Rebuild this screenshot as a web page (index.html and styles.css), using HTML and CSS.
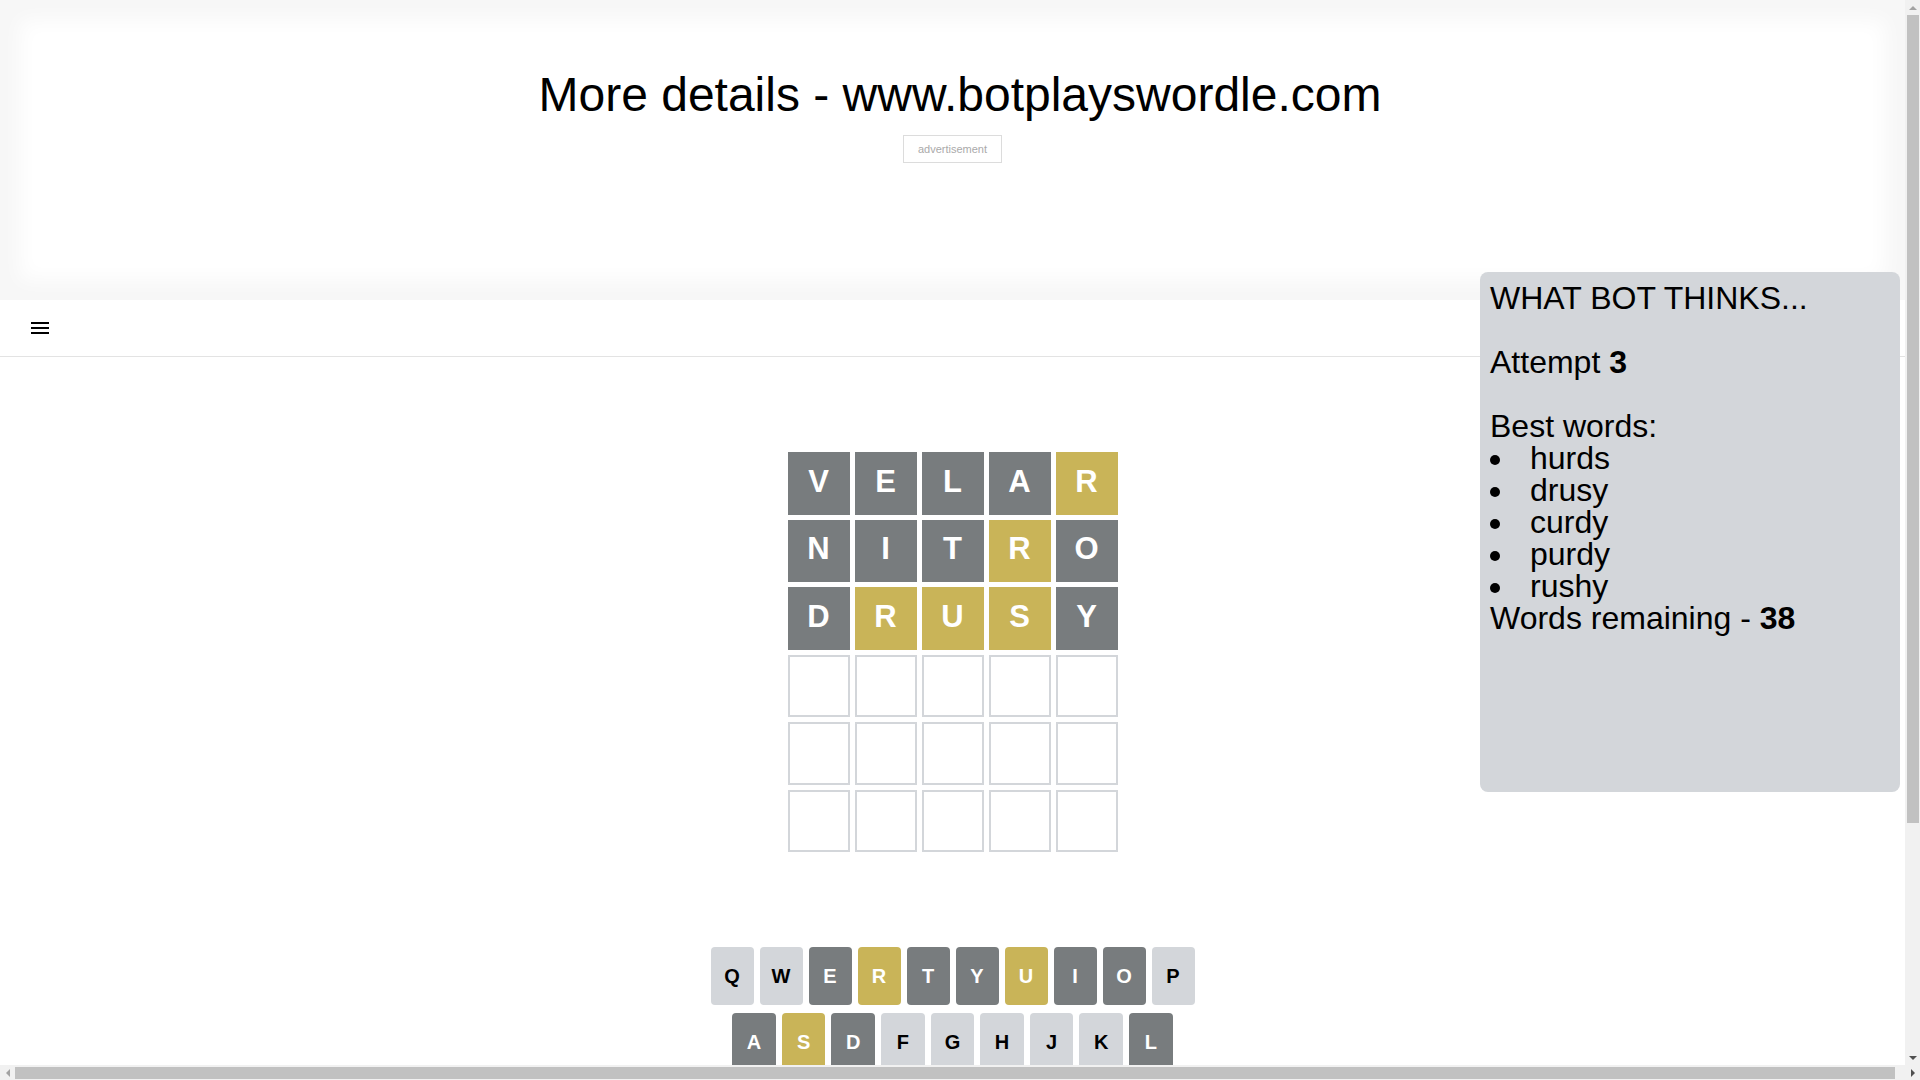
FILE: index.html
```html
<!DOCTYPE html>
<html lang="en">
<head>
    <meta charset="UTF-8">
    <meta name="viewport" content="width=device-width, initial-scale=1.0">
    <title>Bot plays Wordle</title>
    <link rel="stylesheet" href="styles.css">
</head>
<body>
<div class="page">
    <div class="promo">
        <h1>More details - www.botplayswordle.com</h1>
        <div class="ad-slot"><span class="ad-label">advertisement</span></div>
    </div>

    <div class="app">
        <header class="topbar">
            <svg class="menu-icon" width="24" height="24" viewBox="0 0 24 24"><path d="M3 18h18v-2H3v2zm0-5h18v-2H3v2zm0-7v2h18V6H3z" fill="#000"/></svg>
        </header>

        <div class="board-container">
            <div class="board">
                <div class="board-row">
                    <div class="tile absent">v</div>
                    <div class="tile absent">e</div>
                    <div class="tile absent">l</div>
                    <div class="tile absent">a</div>
                    <div class="tile present">r</div>
                </div>
                <div class="board-row">
                    <div class="tile absent">n</div>
                    <div class="tile absent">i</div>
                    <div class="tile absent">t</div>
                    <div class="tile present">r</div>
                    <div class="tile absent">o</div>
                </div>
                <div class="board-row">
                    <div class="tile absent">d</div>
                    <div class="tile present">r</div>
                    <div class="tile present">u</div>
                    <div class="tile present">s</div>
                    <div class="tile absent">y</div>
                </div>
                <div class="board-row">
                    <div class="tile"></div><div class="tile"></div><div class="tile"></div><div class="tile"></div><div class="tile"></div>
                </div>
                <div class="board-row">
                    <div class="tile"></div><div class="tile"></div><div class="tile"></div><div class="tile"></div><div class="tile"></div>
                </div>
                <div class="board-row">
                    <div class="tile"></div><div class="tile"></div><div class="tile"></div><div class="tile"></div><div class="tile"></div>
                </div>
            </div>
        </div>

        <div class="keyboard">
            <div class="keyboard-row">
                <button class="key">q</button>
                <button class="key">w</button>
                <button class="key absent">e</button>
                <button class="key present">r</button>
                <button class="key absent">t</button>
                <button class="key absent">y</button>
                <button class="key present">u</button>
                <button class="key absent">i</button>
                <button class="key absent">o</button>
                <button class="key">p</button>
            </div>
            <div class="keyboard-row">
                <div class="spacer"></div>
                <button class="key absent">a</button>
                <button class="key present">s</button>
                <button class="key absent">d</button>
                <button class="key">f</button>
                <button class="key">g</button>
                <button class="key">h</button>
                <button class="key">j</button>
                <button class="key">k</button>
                <button class="key absent">l</button>
                <div class="spacer"></div>
            </div>
            <div class="keyboard-row">
                <button class="key wide small">enter</button>
                <button class="key">z</button>
                <button class="key">x</button>
                <button class="key">c</button>
                <button class="key absent">v</button>
                <button class="key">b</button>
                <button class="key absent">n</button>
                <button class="key">m</button>
                <button class="key wide">
                    <svg width="24" height="24" viewBox="0 0 24 24"><path fill="#1a1a1b" d="M22 3H7c-.69 0-1.23.35-1.59.88L0 12l5.41 8.11c.36.53.9.89 1.59.89h15c1.1 0 2-.9 2-2V5c0-1.1-.9-2-2-2zm0 16H7.07L2.4 12l4.66-7H22v14zm-11.59-2L14 13.41 17.59 17 19 15.59 15.41 12 19 8.41 17.59 7 14 10.59 10.41 7 9 8.41 12.59 12 9 15.59z"/></svg>
                </button>
            </div>
        </div>
    </div>

    <div class="bot-panel">
        WHAT BOT THINKS...<br><br>
        Attempt <b>3</b><br><br>
        Best words:
        <ul>
            <li>hurds</li>
            <li>drusy</li>
            <li>curdy</li>
            <li>purdy</li>
            <li>rushy</li>
        </ul>
        Words remaining - <b>38</b>
    </div>
</div>

<!-- window scrollbars -->
<div class="scrollbar-v" aria-hidden="true">
    <span class="sb-btn"><i class="arrow up"></i></span>
    <span class="sb-thumb"></span>
    <span class="sb-fill"></span>
    <span class="sb-btn"><i class="arrow down"></i></span>
</div>
<div class="scrollbar-h" aria-hidden="true">
    <span class="sb-btn"><i class="arrow left"></i></span>
    <span class="sb-thumb"></span>
    <span class="sb-fill"></span>
    <span class="sb-btn"><i class="arrow right"></i></span>
</div>
</body>
</html>
```

FILE: styles.css
```css
* { box-sizing: border-box; }
body { margin: 0; overflow: hidden; font-family: "Liberation Sans", Arial, sans-serif; color: #000; background: #fff; }
.page { position: relative; width: calc(100vw - 15px); height: calc(100vh - 15px); overflow: hidden; }

.promo { height: 300px; padding-top: 67px; text-align: center; box-shadow: inset 0 0 20px 20px #f7f7f7; }
.promo h1 { width: 100vw; margin: 0; font-size: 48px; font-weight: normal; }
.ad-slot { margin-top: 13px; }
.ad-label { display: inline-block; padding: 7px 14px; border: 1px solid #dcdcdc; font-size: 11px; color: #aaa; background: #fff; }

.topbar { height: 57px; padding: 0 28px; display: flex; align-items: center; border-bottom: 1px solid #e3e3e3; }
.menu-icon { display: block; }

.board-container { height: 590px; display: flex; align-items: center; justify-content: center; }
.board { width: 330px; height: 400px; display: grid; grid-template-rows: repeat(6, 1fr); gap: 5px; }
.board-row { display: grid; grid-template-columns: repeat(5, 1fr); gap: 5px; }
.tile { display: flex; align-items: center; justify-content: center; padding-bottom: 4px; border: 2px solid #d3d6da; font-size: 31px; font-weight: bold; color: #fff; text-transform: uppercase; line-height: 1; }
.tile.absent { background: #787c7e; border-color: #787c7e; }
.tile.present { background: #c9b458; border-color: #c9b458; }

.keyboard { width: 484px; height: 200px; margin: 0 auto; }
.keyboard-row { display: flex; margin-bottom: 8px; }
.key { flex: 1; height: 58px; margin: 0 6px 0 0; padding: 0; border: 0; border-radius: 4px; background: #d3d6da; color: #000; font-family: "Liberation Sans", Arial, sans-serif; font-size: 20px; font-weight: bold; text-transform: uppercase; display: flex; align-items: center; justify-content: center; }
.keyboard-row .key:last-of-type { margin-right: 0; }
.key.absent { background: #787c7e; color: #fff; }
.key.present { background: #c9b458; color: #fff; }
.key.wide { flex: 1.5; }
.key.small { font-size: 12px; }
.spacer { flex: 0.5; }

.bot-panel { position: absolute; top: 272px; right: 5px; width: 420px; height: 520px; padding: 10px; border-radius: 8px; background: #d3d6da; font-size: 32px; line-height: 32px; }
.bot-panel ul { margin: 0; padding-left: 26px; }
.bot-panel li { padding-left: 14px; }

.scrollbar-v, .scrollbar-h { position: fixed; display: flex; background: #f1f1f1; }
.scrollbar-v { top: 0; right: 0; width: 15px; height: calc(100vh - 15px); flex-direction: column; }
.scrollbar-h { left: 0; bottom: 0; width: 100vw; height: 15px; }
.sb-btn { flex: none; width: 15px; height: 15px; display: flex; align-items: center; justify-content: center; }
.sb-fill { flex: 1; }
.scrollbar-v .sb-thumb { height: 808px; margin: 0 1px 0 2px; background: #c1c1c1; }
.scrollbar-h .sb-thumb { width: calc(100% - 40px); margin: 2px 0 1px; background: #c1c1c1; }
.arrow { width: 0; height: 0; border: 4px solid transparent; }
.arrow.up { border-top: 0; border-bottom-color: #a3a3a3; }
.arrow.down { border-bottom: 0; border-top-color: #505050; }
.arrow.left { border-left: 0; border-right-color: #a3a3a3; }
.arrow.right { border-right: 0; border-left-color: #505050; }
```
